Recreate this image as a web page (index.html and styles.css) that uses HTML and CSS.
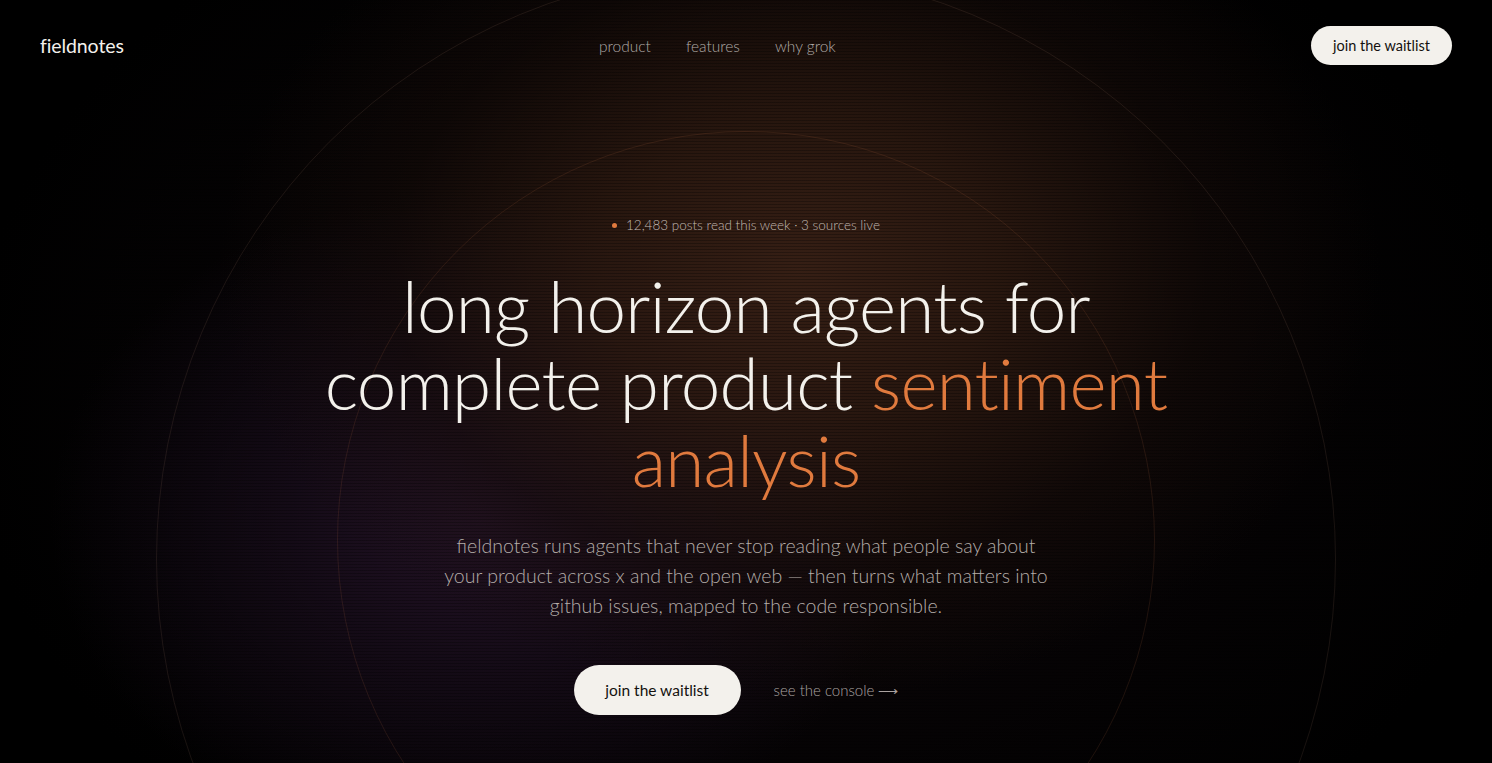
FILE: index.html
```html
<!DOCTYPE html>
<html lang="en">
<head>
<meta charset="utf-8">
<title>fieldnotes</title>
<link rel="stylesheet" href="styles.css">
</head>
<body>
<div class="page">
  <div class="backdrop" aria-hidden="true">
    <div class="glow"></div>
    <div class="scan"></div>
    <div class="ring ring-outer"></div>
    <div class="ring ring-inner"></div>
  </div>

  <header class="topbar">
    <a class="logo" href="#">fieldnotes</a>
    <nav class="nav">
      <a href="#">product</a>
      <a href="#">features</a>
      <a href="#">why grok</a>
    </nav>
    <a class="btn btn-light btn-small" href="#">join the waitlist</a>
  </header>

  <main class="hero">
    <p class="status"><span class="dot"></span>12,483 posts read this week · 3 sources live</p>
    <h1 class="headline">long horizon agents for<br>complete product <span class="accent">sentiment</span><br><span class="accent">analysis</span></h1>
    <p class="lede">fieldnotes runs agents that never stop reading what people say about<br>your product across x and the open web — then turns what matters into<br>github issues, mapped to the code responsible.</p>
    <div class="actions">
      <a class="btn btn-light btn-large" href="#">join the waitlist</a>
      <a class="link-arrow" href="#">see the console <span class="arrow">⟶</span></a>
    </div>
  </main>
</div>
</body>
</html>
```

FILE: styles.css
```css
* { box-sizing: border-box; }

html, body {
  margin: 0;
  padding: 0;
  background: #000;
}

body {
  font-family: "Lato", "Noto Sans", sans-serif;
  color: #f3f1ec;
  -webkit-font-smoothing: antialiased;
}

a { text-decoration: none; color: inherit; }

.page {
  position: relative;
  width: 100%;
  height: 763px;
  overflow: hidden;
  background: #000;
}

.backdrop {
  position: absolute;
  inset: 0;
  pointer-events: none;
}

.glow {
  position: absolute;
  inset: 0;
  background:
    radial-gradient(ellipse 580px 430px at 800px 270px, rgba(56, 32, 21, 0.95) 0%, rgba(46, 26, 16, 0.82) 35%, rgba(24, 13, 9, 0.5) 70%, rgba(0,0,0,0) 100%),
    radial-gradient(ellipse 430px 330px at 480px 520px, rgba(36, 19, 40, 0.95) 0%, rgba(28, 15, 32, 0.65) 45%, rgba(0,0,0,0) 100%),
    radial-gradient(ellipse 780px 580px at 746px 400px, rgba(22, 12, 15, 0.9) 0%, rgba(9, 5, 7, 0.6) 60%, rgba(0,0,0,0) 100%);
}

.scan {
  position: absolute;
  inset: 0;
  background: repeating-linear-gradient(to bottom, rgba(0,0,0,0.28) 0px, rgba(0,0,0,0.28) 1px, rgba(0,0,0,0) 1px, rgba(0,0,0,0) 3px);
}

.ring {
  position: absolute;
  border-radius: 50%;
}

.ring-outer {
  left: 156px;
  top: -31px;
  width: 1180px;
  height: 1180px;
  border: 1px solid rgba(150, 110, 95, 0.16);
}

.ring-inner {
  left: 337px;
  top: 131px;
  width: 818px;
  height: 818px;
  border: 1px solid rgba(190, 110, 70, 0.15);
}

.topbar {
  position: relative;
  display: flex;
  justify-content: space-between;
  align-items: center;
  padding: 26px 40px 0 40px;
}

.logo {
  font-size: 19.5px;
  font-weight: 400;
  color: #f3f1ec;
  letter-spacing: -0.1px;
}

.nav {
  display: flex;
  gap: 35px;
  font-size: 15.5px;
  font-weight: 300;
}

.nav a { color: #b0aaa6; }

.btn {
  display: inline-flex;
  align-items: center;
  justify-content: center;
  background: #f3f1ec;
  color: #14110f;
  border-radius: 999px;
}

.btn-small {
  width: 141px;
  height: 39px;
  font-size: 14.5px;
}

.hero {
  position: relative;
  display: flex;
  flex-direction: column;
  align-items: center;
  text-align: center;
}

.status {
  margin: 151px 0 0 0;
  display: flex;
  align-items: center;
  gap: 9px;
  font-size: 13.5px;
  line-height: 18px;
  font-weight: 300;
  color: #c0b8b1;
}

.dot {
  width: 5px;
  height: 5px;
  border-radius: 50%;
  background: #e07a3e;
}

.headline {
  margin: 33px 0 0 0;
  font-size: 71px;
  line-height: 77px;
  font-weight: 300;
  letter-spacing: -0.75px;
  color: #f3f1ec;
}

.accent { color: #e07a3e; }

.lede {
  margin: 33px 0 0 0;
  font-size: 19.5px;
  line-height: 30px;
  font-weight: 300;
  color: #b4ada9;
}

.actions {
  margin-top: 44px;
  display: flex;
  align-items: center;
  gap: 33px;
}

.btn-large {
  width: 167px;
  height: 50px;
  font-size: 15.5px;
}

.link-arrow {
  padding-right: 20px;
  font-size: 15px;
  font-weight: 300;
  color: #aaa3a0;
}

.arrow { font-size: 14px; }
```
